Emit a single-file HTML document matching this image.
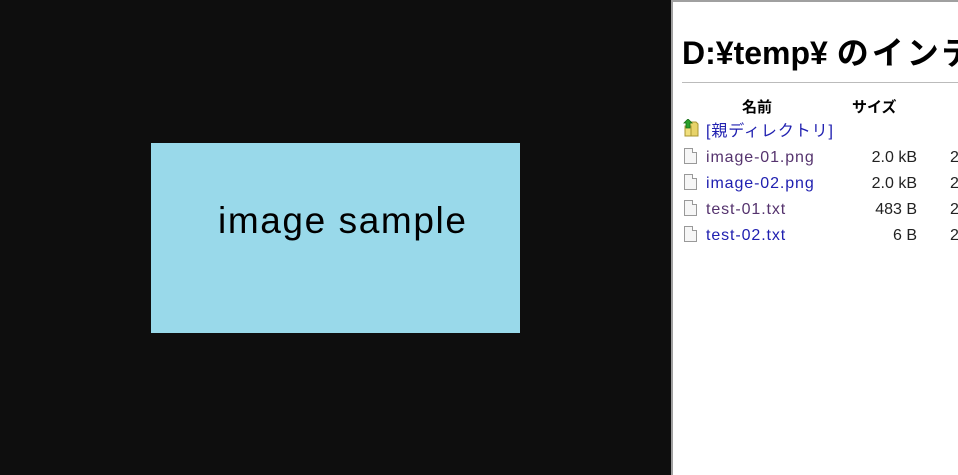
<!DOCTYPE html>
<html><head><meta charset="utf-8"><style>
*{margin:0;padding:0;box-sizing:border-box}
body{width:958px;height:475px;background:#0e0e0e;position:relative;overflow:hidden;font-family:"Liberation Sans","Noto Sans CJK JP",sans-serif}
.img{position:absolute;left:151px;top:143px;width:369px;height:190px;background:#99d9ea}
.img span{position:absolute;left:67px;top:57px;font-size:37px;color:#000;white-space:nowrap;letter-spacing:1.6px}
.pane{position:absolute;left:671px;top:0;width:287px;height:475px;background:#fff;border-left:2px solid #a0a0a0;border-top:2px solid #a0a0a0;overflow:hidden}
h1{position:absolute;left:9px;top:26px;font-size:32px;font-weight:bold;white-space:nowrap;color:#000}
h1 .j{letter-spacing:3px}
hr{position:absolute;left:9px;top:80px;width:300px;border:0;border-top:1px solid #bbb}
.th{position:absolute;top:94px;font-size:15px;font-weight:bold}
.row{position:absolute;left:0;height:20px;width:287px;font-size:16px;line-height:20px;white-space:nowrap}
.row a,.row span{line-height:20px}
.row a{position:absolute;top:0;left:33px;color:#2020b0;text-decoration:none;letter-spacing:0.9px}
.row a.v{color:#55336e}
.sz{position:absolute;top:0;left:150px;width:94px;text-align:right;color:#222}
.d{position:absolute;top:0;left:277px;color:#222}
.ic{position:absolute;left:11px;top:0;width:13px;height:16px;border:1px solid #999;background:#f6f6f6}
.ic:after{content:"";position:absolute;right:-1px;top:-1px;width:4px;height:4px;background:#fff;border-left:1px solid #999;border-bottom:1px solid #999}
</style></head><body>
<div class="img"><span>image sample</span></div>
<div class="pane">
<h1>D:¥temp¥ <span class="j">のインデックス</span></h1>
<hr>
<div class="th" style="left:69px">名前</div>
<div class="th" style="left:179px">サイズ</div>
<div class="row" style="top:120px">
<svg style="position:absolute;left:10px;top:-3px" width="16" height="18" viewBox="0 0 16 18"><path d="M6 3h7l2 2v12H6z" fill="#e8d36a" stroke="#a89430"/><path d="M2 7h6v10H2z" fill="#f1df7d" stroke="#a89430"/><path d="M5 0l4 4H7v5H3V4H1z" fill="#2aa12a" stroke="#176f17" stroke-width=".8"/></svg>
<a href="#">[親ディレクトリ]</a></div>
<div class="row" style="top:146px"><div class="ic"></div><a class="v" href="#">image-01.png</a><span class="sz">2.0 kB</span><span class="d">2</span></div>
<div class="row" style="top:172px"><div class="ic"></div><a href="#">image-02.png</a><span class="sz">2.0 kB</span><span class="d">2</span></div>
<div class="row" style="top:198px"><div class="ic"></div><a class="v" href="#">test-01.txt</a><span class="sz">483 B</span><span class="d">2</span></div>
<div class="row" style="top:224px"><div class="ic"></div><a href="#">test-02.txt</a><span class="sz">6 B</span><span class="d">2</span></div>
</div>
</body></html>
